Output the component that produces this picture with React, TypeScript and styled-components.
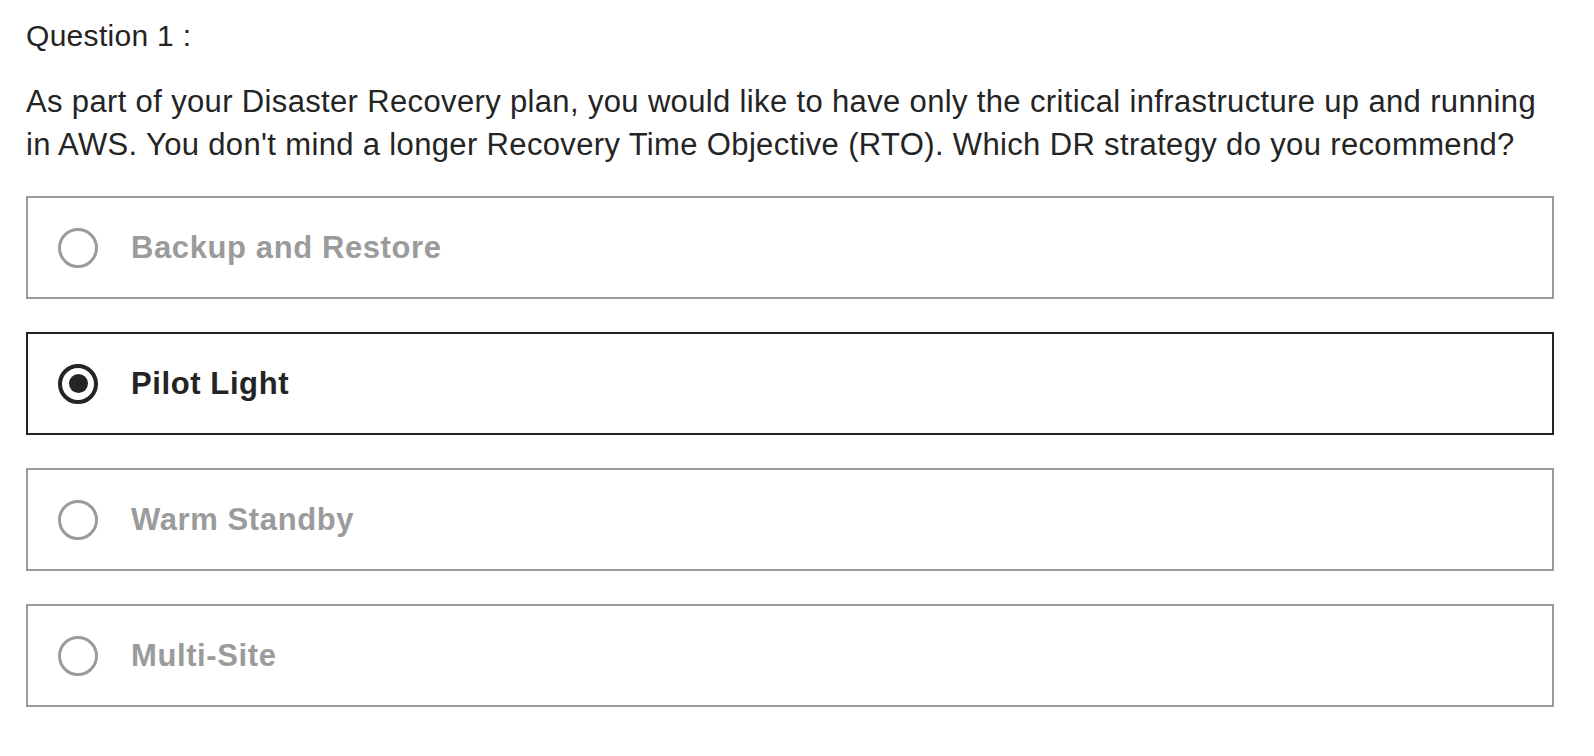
import React from 'react';
import styled, { createGlobalStyle } from 'styled-components';

const GlobalStyle = createGlobalStyle`
  html, body {
    margin: 0;
    padding: 0;
    background: #fff;
  }
  body {
    font-family: "Liberation Sans", Arial, sans-serif;
    color: #242424;
  }
`;

const Page = styled.main`
  padding: 14px 40px 40px 26px;
`;

const Label = styled.div`
  font-size: 30px;
  line-height: 43px;
  letter-spacing: 0.3px;
`;

const Prompt = styled.p`
  margin: 23px 0 30px;
  font-size: 31px;
  line-height: 43px;
  letter-spacing: 0.35px;
`;

const Options = styled.div`
  display: flex;
  flex-direction: column;
  gap: 33px;
`;

const Option = styled.label<{ $selected: boolean }>`
  display: flex;
  align-items: center;
  gap: 33px;
  height: 103px;
  box-sizing: border-box;
  padding: 0 30px;
  border: 2px solid ${p => (p.$selected ? '#242424' : '#9b9b9b')};
  cursor: pointer;
`;

const Radio = styled.span<{ $selected: boolean }>`
  flex: none;
  width: 40px;
  height: 40px;
  box-sizing: border-box;
  border-radius: 50%;
  border: ${p => (p.$selected ? '4px solid #242424' : '3px solid #9b9b9b')};
  display: grid;
  place-items: center;

  &::after {
    content: '';
    width: 19px;
    height: 19px;
    border-radius: 50%;
    background: #242424;
    display: ${p => (p.$selected ? 'block' : 'none')};
  }
`;

const OptionText = styled.span<{ $selected: boolean }>`
  font-size: 31px;
  font-weight: 700;
  letter-spacing: 0.6px;
  color: ${p => (p.$selected ? '#242424' : '#9b9b9b')};
`;

const answers = ['Backup and Restore', 'Pilot Light', 'Warm Standby', 'Multi-Site'];

export default function App() {
  const [picked, setPicked] = React.useState(1);

  return (
    <Page>
      <GlobalStyle />
      <Label>Question 1 :</Label>
      <Prompt>
        As part of your Disaster Recovery plan, you would like to have only the critical infrastructure up and running
        in AWS. You don't mind a longer Recovery Time Objective (RTO). Which DR strategy do you recommend?
      </Prompt>
      <Options>
        {answers.map((a, i) => (
          <Option key={a} $selected={i === picked} onClick={() => setPicked(i)}>
            <Radio $selected={i === picked} />
            <OptionText $selected={i === picked}>{a}</OptionText>
          </Option>
        ))}
      </Options>
    </Page>
  );
}
